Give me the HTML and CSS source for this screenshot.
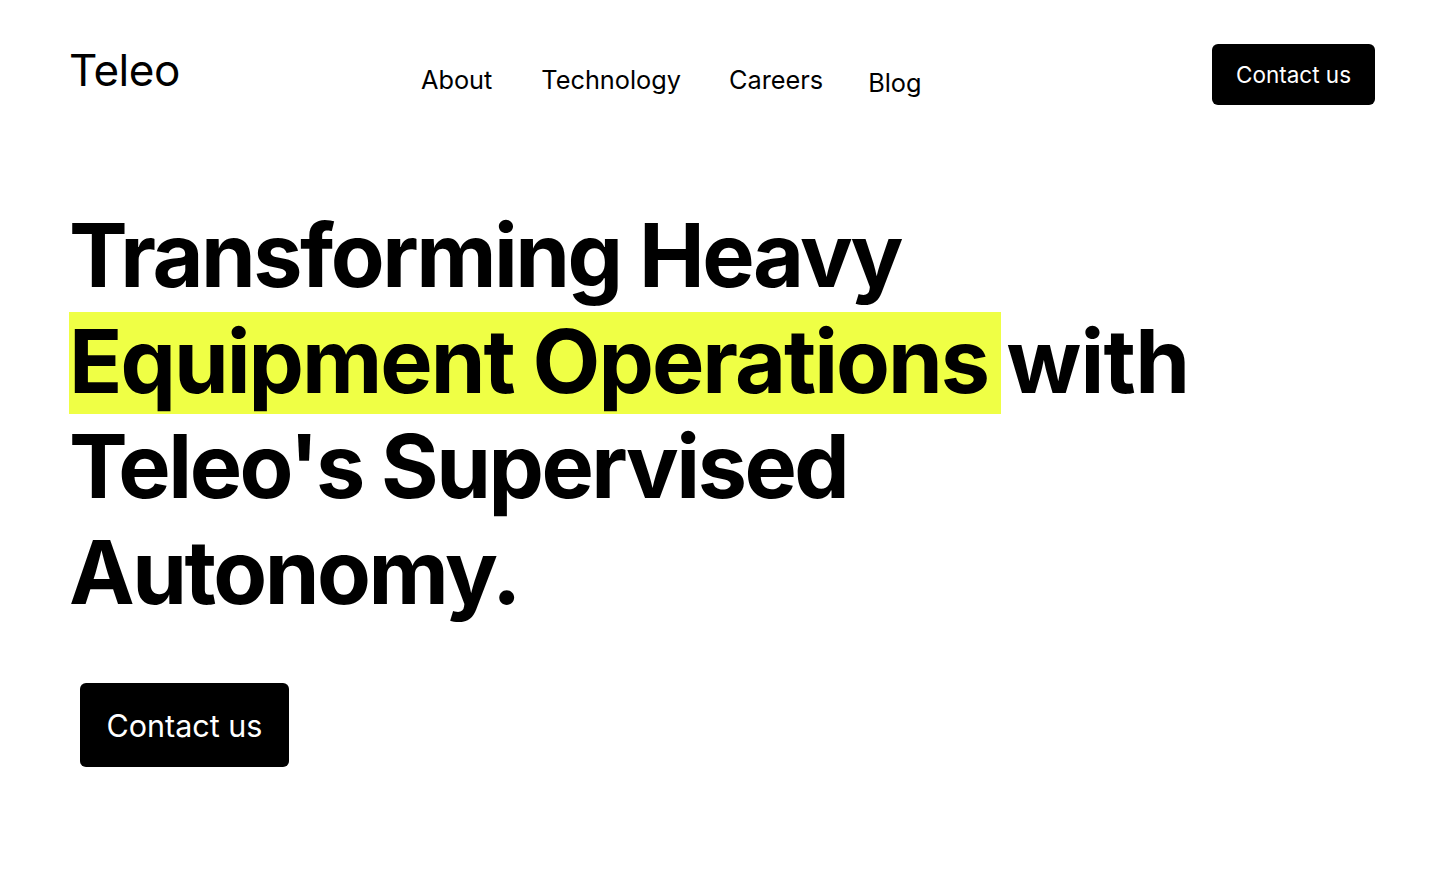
FILE: index.html
```html
<!DOCTYPE html>
<html lang="en">
<head>
<meta charset="utf-8">
<title>Teleo</title>
<link rel="stylesheet" href="styles.css">
</head>
<body>
<header class="header">
  <a class="logo" href="#">Teleo</a>
  <nav class="nav">
    <a class="nav-link" href="#">About</a>
    <a class="nav-link" href="#">Technology</a>
    <a class="nav-link" href="#">Careers</a>
    <a class="nav-link nav-link-blog" href="#">Blog</a>
  </nav>
  <a class="btn btn-small" href="#">Contact us</a>
</header>
<main class="hero">
  <h1 class="hero-title">Transforming Heavy <span class="highlight">Equipment Operations</span> <span class="wide">with</span> Teleo's Supervised Autonomy.</h1>
  <a class="btn btn-large" href="#">Contact us</a>
</main>
</body>
</html>
```

FILE: styles.css
```css
* { box-sizing: border-box; }
html, body { margin: 0; padding: 0; background: #fff; }
body {
  font-family: Inter, "Noto Sans", sans-serif;
  color: #000;
  width: 1440px;
  height: 879px;
  overflow: hidden;
}
a { color: inherit; text-decoration: none; }

.header {
  display: flex;
  align-items: flex-start;
  padding: 44px 65px 0 72px;
}
.logo {
  font-size: 44px;
  font-weight: 400;
  line-height: 1;
  margin-top: 4px;
  margin-left: -3px;
  letter-spacing: -0.5px;
  width: 352px;
}
.nav {
  display: flex;
  align-items: flex-start;
  gap: 48px;
  margin-top: 20px;
}
.nav-link {
  font-size: 25.3px;
  line-height: 1.25;
  font-weight: 400;
}
.nav-link:first-child { margin-right: 1px; }
.nav-link-blog { margin-top: 3px; margin-left: -3px; }

.btn {
  display: inline-flex;
  align-items: center;
  justify-content: center;
  background: #000;
  color: #fff;
  border-radius: 6px;
}
.btn-small {
  margin-left: auto;
  width: 163px;
  height: 61px;
  font-size: 22.5px;
  padding-bottom: 1px;
}
.btn-large {
  margin-left: 11px;
  margin-top: 58px;
  width: 209px;
  height: 84px;
  font-size: 30.5px;
}

.hero {
  padding: 0 65px 0 69px;
  margin-top: 98px;
}
.hero-title {
  margin: 0;
  font-size: 88px;
  line-height: 1.2;
  font-weight: 700;
  letter-spacing: -2.5px;
  max-width: 1200px;
}
.highlight {
  background: linear-gradient(to bottom, transparent 4px, #efff45 4px);
  letter-spacing: -2px;
  padding: 0 13px 0 0;
  margin: 0 -13px 0 0;
}
.wide { letter-spacing: -0.8px; }
```
